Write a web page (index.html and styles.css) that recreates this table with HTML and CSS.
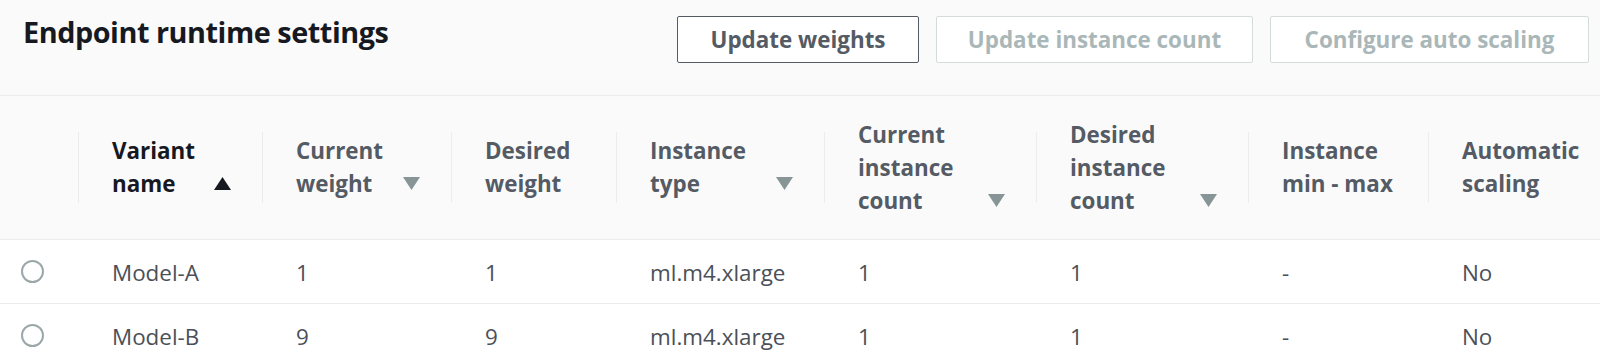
FILE: index.html
```html
<!DOCTYPE html>
<html lang="en">
<head>
<meta charset="utf-8">
<title>Endpoint runtime settings</title>
<link rel="stylesheet" href="styles.css">
</head>
<body>
<section class="panel">
  <header class="panel-header">
    <h2 class="panel-title">Endpoint runtime settings</h2>
    <div class="actions">
      <button class="btn btn-weights">Update weights</button>
      <button class="btn btn-count" disabled>Update instance count</button>
      <button class="btn btn-scaling" disabled>Configure auto scaling</button>
    </div>
  </header>
  <table class="grid">
    <colgroup>
      <col class="c-sel">
      <col class="c-name">
      <col class="c-cw">
      <col class="c-dw">
      <col class="c-type">
      <col class="c-cic">
      <col class="c-dic">
      <col class="c-mm">
      <col class="c-auto">
    </colgroup>
    <thead>
      <tr>
        <th></th>
        <th class="sorted"><div class="th-inner"><span class="sep"></span><div class="th-content"><span class="th-label">Variant<br>name</span><span class="sort"><svg width="17" height="13" viewBox="0 0 17 13"><polygon points="8.5,0 17,13 0,13"/></svg></span></div></div></th>
        <th><div class="th-inner"><span class="sep"></span><div class="th-content"><span class="th-label">Current<br>weight</span><span class="sort"><svg width="17" height="13" viewBox="0 0 17 13"><polygon points="0,0 17,0 8.5,13"/></svg></span></div></div></th>
        <th><div class="th-inner"><span class="sep"></span><div class="th-content"><span class="th-label">Desired<br>weight</span></div></div></th>
        <th><div class="th-inner"><span class="sep"></span><div class="th-content"><span class="th-label">Instance<br>type</span><span class="sort"><svg width="17" height="13" viewBox="0 0 17 13"><polygon points="0,0 17,0 8.5,13"/></svg></span></div></div></th>
        <th><div class="th-inner"><span class="sep"></span><div class="th-content"><span class="th-label">Current<br>instance<br>count</span><span class="sort"><svg width="17" height="13" viewBox="0 0 17 13"><polygon points="0,0 17,0 8.5,13"/></svg></span></div></div></th>
        <th><div class="th-inner"><span class="sep"></span><div class="th-content"><span class="th-label">Desired<br>instance<br>count</span><span class="sort"><svg width="17" height="13" viewBox="0 0 17 13"><polygon points="0,0 17,0 8.5,13"/></svg></span></div></div></th>
        <th><div class="th-inner"><span class="sep"></span><div class="th-content"><span class="th-label">Instance<br>min - max</span></div></div></th>
        <th><div class="th-inner"><span class="sep"></span><div class="th-content"><span class="th-label">Automatic<br>scaling</span></div></div></th>
      </tr>
    </thead>
    <tbody>
      <tr>
        <td class="sel"><span class="radio"></span></td>
        <td>Model-A</td>
        <td>1</td>
        <td>1</td>
        <td>ml.m4.xlarge</td>
        <td>1</td>
        <td>1</td>
        <td>-</td>
        <td>No</td>
      </tr>
      <tr>
        <td class="sel"><span class="radio"></span></td>
        <td>Model-B</td>
        <td>9</td>
        <td>9</td>
        <td>ml.m4.xlarge</td>
        <td>1</td>
        <td>1</td>
        <td>-</td>
        <td>No</td>
      </tr>
    </tbody>
  </table>
</section>
</body>
</html>
```
FILE: styles.css
```css
* { box-sizing: border-box; }

html, body {
  margin: 0;
  padding: 0;
  background: #fafafa;
  font-family: "Open Sans", "Noto Sans", sans-serif;
  color: #545b64;
}

.panel {
  width: 1600px;
}

.panel-header {
  display: flex;
  justify-content: space-between;
  align-items: flex-start;
  height: 96px;
  padding: 16px 11px 0 23px;
  border-bottom: 1px solid #eaeded;
}

.panel-title {
  margin: -1px 0 0 0;
  font-size: 28.8px;
  line-height: 1.2;
  font-weight: 700;
  letter-spacing: -0.45px;
  color: #16191f;
}

.actions {
  display: flex;
  gap: 17px;
}

.btn {
  height: 47px;
  padding: 0;
  border: 1px solid #545b64;
  border-radius: 2px;
  background: #ffffff;
  color: #545b64;
  font-family: inherit;
  font-size: 22.4px;
  font-weight: 700;
  line-height: 45px;
  text-align: center;
  white-space: nowrap;
}

.btn-weights { width: 242px; }
.btn-count { width: 317px; }
.btn-scaling { width: 319px; }

.btn:disabled {
  border-color: #d5dbdb;
  color: #aab7b8;
}

.grid {
  width: 1600px;
  table-layout: fixed;
  border-collapse: collapse;
  border-spacing: 0;
}

.c-sel { width: 78px; }
.c-name { width: 184px; }
.c-cw { width: 189px; }
.c-dw { width: 165px; }
.c-type { width: 208px; }
.c-cic { width: 212px; }
.c-dic { width: 212px; }
.c-mm { width: 180px; }
.c-auto { width: 172px; }

.grid thead th {
  height: 143px;
  padding: 0 31px 0 0;
  background: #fafafa;
  border-bottom: 1px solid #eaeded;
  text-align: left;
  vertical-align: middle;
  font-size: 22.4px;
  font-weight: 700;
  line-height: 33px;
  color: #545b64;
}

.grid thead th.sorted {
  color: #16191f;
}

.th-inner {
  display: flex;
  align-items: center;
}

.sep {
  flex: none;
  width: 1px;
  height: 71px;
  margin-right: 33px;
  background: #eaeded;
}

.th-content {
  flex: 1;
  display: flex;
  align-items: flex-end;
  justify-content: space-between;
}

.sort {
  flex: none;
  height: 33px;
  display: flex;
  align-items: center;
}

.sort svg {
  display: block;
  fill: #879596;
}

.sorted .sort svg {
  fill: #16191f;
}

.grid tbody td {
  height: 64px;
  padding: 2px 0 0 34px;
  background: #ffffff;
  border-bottom: 1px solid #eaeded;
  vertical-align: middle;
  font-size: 22.4px;
  line-height: 33px;
  color: #4b5058;
  white-space: nowrap;
}

.grid tbody td.sel {
  padding: 0 0 0 21px;
}

.radio {
  display: block;
  width: 23px;
  height: 23px;
  border: 2px solid #9ba7a8;
  border-radius: 50%;
  background: #ffffff;
}
```
